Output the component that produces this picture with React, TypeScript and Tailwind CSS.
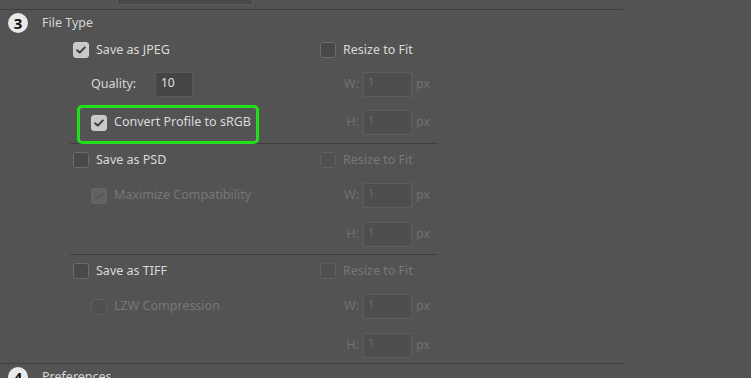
import React from "react";

const font = { fontFamily: '"Noto Sans", "DejaVu Sans", sans-serif' };

function Check({ checked, disabled }: { checked?: boolean; disabled?: boolean }) {
  const bg = checked
    ? disabled
      ? "bg-[#626262] border-[#656565]"
      : "bg-[#c8c8c8] border-[#cfcfcf]"
    : disabled
    ? "bg-[#4f4f4f] border-[#5f5f5f]"
    : "bg-[#494949] border-[#6c6c6c]";
  const stroke = disabled ? "#585858" : "#3a3a3a";
  return (
    <div className={`w-[16px] h-[16px] rounded-[3px] border flex items-center justify-center shrink-0 ${bg}`}>
      {checked && (
        <svg width="10" height="8" viewBox="0 0 10 8">
          <path d="M1.2 4.2 L3.8 6.6 L8.8 1.4" fill="none" stroke={stroke} strokeWidth="1.9" strokeLinecap="round" strokeLinejoin="round" />
        </svg>
      )}
    </div>
  );
}

function DimField({ label }: { label: string }) {
  return (
    <div className="flex items-center h-[25px] text-[#717171]">
      <span className="w-[43px] text-right pr-[4px] text-[12.5px]">{label}</span>
      <div className="w-[49px] h-[25px] bg-[#4e4e4e] border border-[#5d5d5d] text-[11px] text-[#6c6c6c] pl-[4px] leading-[18px]">1</div>
      <span className="ml-[4px] text-[12.5px]">px</span>
    </div>
  );
}

function CheckRow({ checked, disabled, label }: { checked?: boolean; disabled?: boolean; label: string }) {
  return (
    <div className="flex items-center h-[16px] gap-[7px]">
      <Check checked={checked} disabled={disabled} />
      <span className={`text-[12.5px] ${disabled ? "text-[#777777]" : "text-[#dadada]"}`}>{label}</span>
    </div>
  );
}

function Badge({ n }: { n: string }) {
  return (
    <div className="w-[20px] h-[20px] rounded-full bg-[#e9e9e9] flex items-center justify-center text-[15px] font-bold text-[#111] leading-none">
      {n}
    </div>
  );
}

export default function App() {
  return (
    <div className="w-[751px] h-[378px] bg-[#535353] overflow-hidden" style={font}>
      {/* bottom of previous input */}
      <div className="h-[9px]">
        <div className="ml-[117px] w-[136px] h-[5px] bg-[#484848] border-x border-b border-[#5c5c5c]" />
      </div>
      <div className="w-[623px] h-px bg-[#3e3e3e]" />

      {/* Header */}
      <div className="flex items-center h-[20px] mt-[3px] pl-[8px]">
        <Badge n="3" />
        <span className="ml-[14px] text-[12.5px] text-[#d6d6d6]">File Type</span>
      </div>

      {/* JPEG group */}
      <div className="relative w-[438px] ml-[70px] pt-[9px] pb-[8px] flex">
        <div className="w-[250px] pl-[3px] flex flex-col">
          <CheckRow checked label="Save as JPEG" />
          <div className="mt-[14px] h-[25px] flex items-center pl-[18px]">
            <span className="text-[12.5px] text-[#d6d6d6] w-[64px]">Quality:</span>
            <div className="w-[38px] h-[25px] bg-[#454545] border border-[#5a5a5a] text-[12px] text-[#e2e2e2] pl-[5px] leading-[20px]">10</div>
          </div>
          <div className="mt-[13px] h-[25px] flex items-center pl-[18px]">
            <CheckRow checked label="Convert Profile to sRGB" />
          </div>
        </div>
        <div className="flex flex-col">
          <CheckRow label="Resize to Fit" />
          <div className="mt-[14px]"><DimField label="W:" /></div>
          <div className="mt-[13px]"><DimField label="H:" /></div>
        </div>
        <div className="absolute left-[7px] top-[72px] w-[182px] h-[39px] border-[3px] border-[#1fe01a] rounded-[5px]" />
      </div>
      <div className="ml-[70px] w-[368px] h-px bg-[#3e3e3e]" />

      {/* PSD group */}
      <div className="w-[438px] ml-[70px] pt-[8px] pb-[7px] flex">
        <div className="w-[250px] pl-[3px] flex flex-col">
          <CheckRow label="Save as PSD" />
          <div className="mt-[15px] h-[25px] flex items-center pl-[18px]">
            <CheckRow checked disabled label="Maximize Compatibility" />
          </div>
        </div>
        <div className="flex flex-col">
          <CheckRow disabled label="Resize to Fit" />
          <div className="mt-[15px]"><DimField label="W:" /></div>
          <div className="mt-[14px]"><DimField label="H:" /></div>
        </div>
      </div>
      <div className="ml-[70px] w-[368px] h-px bg-[#3e3e3e]" />

      {/* TIFF group */}
      <div className="w-[438px] ml-[70px] pt-[8px] pb-[5px] flex">
        <div className="w-[250px] pl-[3px] flex flex-col">
          <CheckRow label="Save as TIFF" />
          <div className="mt-[15px] h-[25px] flex items-center pl-[18px]">
            <CheckRow disabled label="LZW Compression" />
          </div>
        </div>
        <div className="flex flex-col">
          <CheckRow disabled label="Resize to Fit" />
          <div className="mt-[15px]"><DimField label="W:" /></div>
          <div className="mt-[14px]"><DimField label="H:" /></div>
        </div>
      </div>
      <div className="w-[623px] h-px bg-[#3e3e3e]" />

      {/* Preferences header */}
      <div className="flex items-center h-[20px] mt-[3px] pl-[8px]">
        <Badge n="4" />
        <span className="ml-[14px] text-[12.5px] text-[#d6d6d6]">Preferences</span>
      </div>
    </div>
  );
}
